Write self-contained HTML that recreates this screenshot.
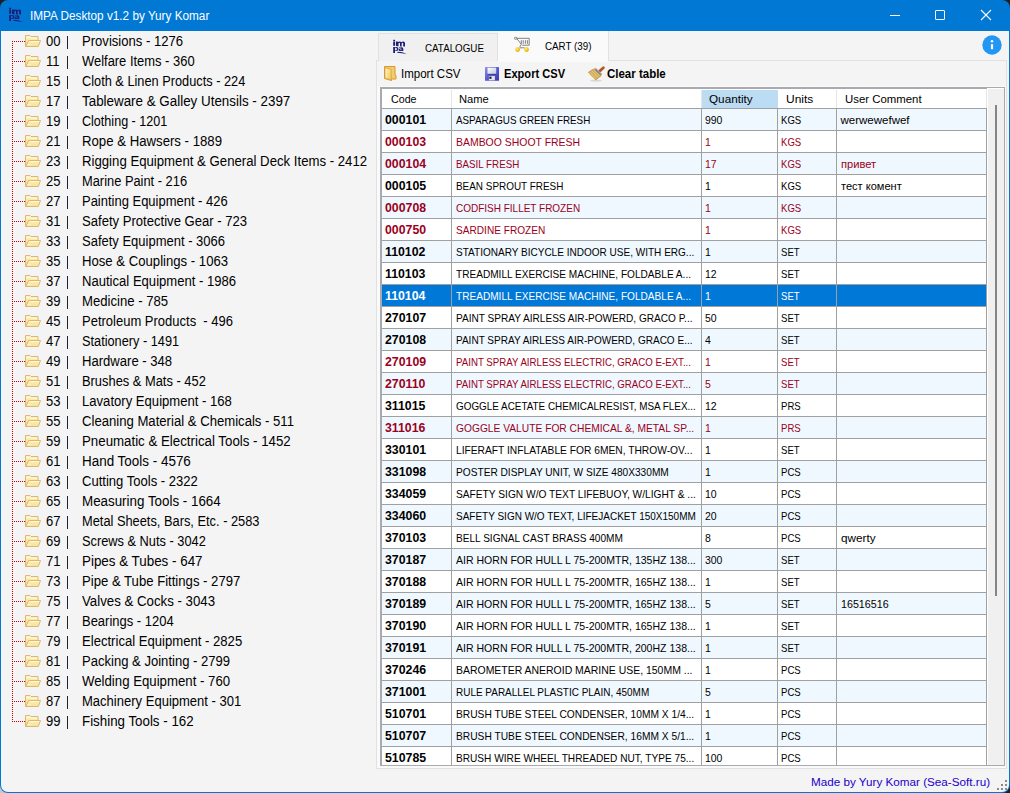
<!DOCTYPE html>
<html><head><meta charset="utf-8">
<style>
*{box-sizing:border-box;margin:0;padding:0}
html,body{width:1010px;height:793px;overflow:hidden;background:#1f1f1f}
body{font-family:"Liberation Sans",sans-serif;position:relative}
#win{position:absolute;left:0;top:0;width:1010px;height:793px;background:#0078d4;border-radius:8px;overflow:hidden}
.r{position:absolute}
.t{position:absolute;white-space:pre}
</style></head><body>
<svg width="0" height="0" style="position:absolute">
<defs>
<linearGradient id="fg" x1="0" y1="0" x2="0" y2="1"><stop offset="0" stop-color="#fff3c4"/><stop offset="1" stop-color="#f2d98a"/></linearGradient>
<linearGradient id="fg2" x1="0" y1="0" x2="0" y2="1"><stop offset="0" stop-color="#fbeeb0"/><stop offset="1" stop-color="#f6e29a"/></linearGradient>
<symbol id="folder" viewBox="0 0 16 12">
 <path d="M0.5 0.5h4.5l1 1h7v4h1.5l-2 6h-12z" fill="url(#fg)" stroke="#dcb870" stroke-width="1"/>
 <path d="M1.5 2.2h3.3l1 1h6.5" stroke="#fffbe8" stroke-width="0.9" fill="none"/>
 <path d="M3.5 5.5h12l-2.2 6h-12.5z" fill="url(#fg2)" stroke="#dcb870" stroke-width="1"/>
 <path d="M4.2 6.6h10M2.6 9.8h3" stroke="#fffbe0" stroke-width="0.9" fill="none"/>
</symbol>
<symbol id="impa" viewBox="0 0 16 17">
 <g fill="#1e1c76">
 <rect x="1.2" y="1.8" width="1.9" height="1.3"/>
 <rect x="1.2" y="3.5" width="1.8" height="4.3"/>
 <path d="M3.9 7.8V3.5h1.8v0.6q0.8-0.7 2-0.7q1.2 0 1.5 0.8q0.9-0.8 2.1-0.8q1.7 0 1.7 1.8v3.4h-1.8v-3.1q0-0.7-0.7-0.7t-0.8 0.7v3.1h-1.7v-3.1q0-0.7-0.7-0.7t-0.8 0.7v3.1z"/>
 <path fill-rule="evenodd" d="M1.2 14.9V9h1.8v0.4q0.6-0.5 1.5-0.5q2 0 2 2.1q0 2.1-2 2.1q-0.9 0-1.5-0.5v2.3z M3 10.3v1.6q0.4 0.4 1 0.4q0.9 0 0.9-1.2q0-1.2-0.9-1.2q-0.6 0-1 0.4z"/>
 <path fill-rule="evenodd" d="M7 9.3q0.9-0.4 2-0.4q2.3 0 2.3 1.9v2.2h-1.7v-0.5q-0.5 0.6-1.5 0.6q-1.5 0-1.5-1.3q0-1.5 2.6-1.6h0.4q0-0.6-0.9-0.6q-0.8 0-1.6 0.4z M9.6 11.1h-0.4q-1 0.1-1 0.6q0 0.4 0.5 0.4q0.9 0 0.9-1z"/>
 <path d="M5.3 13.9q4.5-0.3 9.4 2.1q-4.8-0.9-9.4-1.2z"/>
 </g>
</symbol>
</defs></svg>
<div class="r" style="left:0;top:783px;width:10px;height:10px;background:#c8c8c8"></div>
<div id="win">
<svg class="r" style="left:7.8px;top:6.2px" width="16" height="17"><use href="#impa"/></svg>
<div class="t" style="left:29.8px;top:9.84px;font-size:12px;line-height:12px;color:#fff;transform:scaleX(0.98);transform-origin:0 0;">IMPA Desktop v1.2 by Yury Komar</div>
<div class="r" style="left:890px;top:15px;width:10px;height:1px;background:#fff;"></div>
<div class="r" style="left:935px;top:10px;width:10px;height:10px;border:1px solid #fff;border-radius:1px"></div>
<svg class="r" style="left:980px;top:9px" width="12" height="12"><path d="M1 1L11 11M11 1L1 11" stroke="#fff" stroke-width="1.1"/></svg>
<div class="r" style="left:1px;top:31px;width:1008px;height:761px;background:#f4f4f4;border-radius:0 0 7px 7px"></div>
<div class="r" style="left:12px;top:41px;width:1px;height:681px;background:repeating-linear-gradient(to bottom,#c00000 0 1px,transparent 1px 2px)"></div>
<div class="r" style="left:13px;top:41px;width:12px;height:1px;background:repeating-linear-gradient(to right,transparent 0 1px,#c00000 1px 2px)"></div>
<svg class="r" style="left:25px;top:35px" width="16" height="12"><use href="#folder"/></svg>
<div class="t" style="left:46px;top:34.15px;font-size:14px;line-height:14px;color:#000;transform:scaleX(0.93);transform-origin:0 0;">00</div>
<div class="r" style="left:67px;top:36px;width:1px;height:13px;background:#202030;"></div>
<div class="t" style="left:81.5px;top:34.15px;font-size:14px;line-height:14px;color:#000;transform:scaleX(0.9346071428571427);transform-origin:0 0;">Provisions - 1276</div>
<div class="r" style="left:13px;top:61px;width:12px;height:1px;background:repeating-linear-gradient(to right,transparent 0 1px,#c00000 1px 2px)"></div>
<svg class="r" style="left:25px;top:55px" width="16" height="12"><use href="#folder"/></svg>
<div class="t" style="left:46px;top:54.15px;font-size:14px;line-height:14px;color:#000;transform:scaleX(0.93);transform-origin:0 0;">11</div>
<div class="r" style="left:67px;top:56px;width:1px;height:13px;background:#202030;"></div>
<div class="t" style="left:81.5px;top:54.15px;font-size:14px;line-height:14px;color:#000;transform:scaleX(0.9235571428571429);transform-origin:0 0;">Welfare Items - 360</div>
<div class="r" style="left:13px;top:81px;width:12px;height:1px;background:repeating-linear-gradient(to right,transparent 0 1px,#c00000 1px 2px)"></div>
<svg class="r" style="left:25px;top:75px" width="16" height="12"><use href="#folder"/></svg>
<div class="t" style="left:46px;top:74.15px;font-size:14px;line-height:14px;color:#000;transform:scaleX(0.93);transform-origin:0 0;">15</div>
<div class="r" style="left:67px;top:76px;width:1px;height:13px;background:#202030;"></div>
<div class="t" style="left:81.5px;top:74.15px;font-size:14px;line-height:14px;color:#000;transform:scaleX(0.9122285714285715);transform-origin:0 0;">Cloth &amp; Linen Products - 224</div>
<div class="r" style="left:13px;top:101px;width:12px;height:1px;background:repeating-linear-gradient(to right,transparent 0 1px,#c00000 1px 2px)"></div>
<svg class="r" style="left:25px;top:95px" width="16" height="12"><use href="#folder"/></svg>
<div class="t" style="left:46px;top:94.15px;font-size:14px;line-height:14px;color:#000;transform:scaleX(0.93);transform-origin:0 0;">17</div>
<div class="r" style="left:67px;top:96px;width:1px;height:13px;background:#202030;"></div>
<div class="t" style="left:81.5px;top:94.15px;font-size:14px;line-height:14px;color:#000;transform:scaleX(0.9560571428571428);transform-origin:0 0;">Tableware &amp; Galley Utensils - 2397</div>
<div class="r" style="left:13px;top:121px;width:12px;height:1px;background:repeating-linear-gradient(to right,transparent 0 1px,#c00000 1px 2px)"></div>
<svg class="r" style="left:25px;top:115px" width="16" height="12"><use href="#folder"/></svg>
<div class="t" style="left:46px;top:114.15px;font-size:14px;line-height:14px;color:#000;transform:scaleX(0.93);transform-origin:0 0;">19</div>
<div class="r" style="left:67px;top:116px;width:1px;height:13px;background:#202030;"></div>
<div class="t" style="left:81.5px;top:114.15px;font-size:14px;line-height:14px;color:#000;transform:scaleX(0.8980214285714286);transform-origin:0 0;">Clothing - 1201</div>
<div class="r" style="left:13px;top:141px;width:12px;height:1px;background:repeating-linear-gradient(to right,transparent 0 1px,#c00000 1px 2px)"></div>
<svg class="r" style="left:25px;top:135px" width="16" height="12"><use href="#folder"/></svg>
<div class="t" style="left:46px;top:134.15px;font-size:14px;line-height:14px;color:#000;transform:scaleX(0.93);transform-origin:0 0;">21</div>
<div class="r" style="left:67px;top:136px;width:1px;height:13px;background:#202030;"></div>
<div class="t" style="left:81.5px;top:134.15px;font-size:14px;line-height:14px;color:#000;transform:scaleX(0.9420357142857142);transform-origin:0 0;">Rope &amp; Hawsers - 1889</div>
<div class="r" style="left:13px;top:161px;width:12px;height:1px;background:repeating-linear-gradient(to right,transparent 0 1px,#c00000 1px 2px)"></div>
<svg class="r" style="left:25px;top:155px" width="16" height="12"><use href="#folder"/></svg>
<div class="t" style="left:46px;top:154.15px;font-size:14px;line-height:14px;color:#000;transform:scaleX(0.93);transform-origin:0 0;">23</div>
<div class="r" style="left:67px;top:156px;width:1px;height:13px;background:#202030;"></div>
<div class="t" style="left:81.5px;top:154.15px;font-size:14px;line-height:14px;color:#000;transform:scaleX(0.94185);transform-origin:0 0;">Rigging Equipment &amp; General Deck Items - 2412</div>
<div class="r" style="left:13px;top:181px;width:12px;height:1px;background:repeating-linear-gradient(to right,transparent 0 1px,#c00000 1px 2px)"></div>
<svg class="r" style="left:25px;top:175px" width="16" height="12"><use href="#folder"/></svg>
<div class="t" style="left:46px;top:174.15px;font-size:14px;line-height:14px;color:#000;transform:scaleX(0.93);transform-origin:0 0;">25</div>
<div class="r" style="left:67px;top:176px;width:1px;height:13px;background:#202030;"></div>
<div class="t" style="left:81.5px;top:174.15px;font-size:14px;line-height:14px;color:#000;transform:scaleX(0.9185428571428572);transform-origin:0 0;">Marine Paint - 216</div>
<div class="r" style="left:13px;top:201px;width:12px;height:1px;background:repeating-linear-gradient(to right,transparent 0 1px,#c00000 1px 2px)"></div>
<svg class="r" style="left:25px;top:195px" width="16" height="12"><use href="#folder"/></svg>
<div class="t" style="left:46px;top:194.15px;font-size:14px;line-height:14px;color:#000;transform:scaleX(0.93);transform-origin:0 0;">27</div>
<div class="r" style="left:67px;top:196px;width:1px;height:13px;background:#202030;"></div>
<div class="t" style="left:81.5px;top:194.15px;font-size:14px;line-height:14px;color:#000;transform:scaleX(0.9267142857142857);transform-origin:0 0;">Painting Equipment - 426</div>
<div class="r" style="left:13px;top:221px;width:12px;height:1px;background:repeating-linear-gradient(to right,transparent 0 1px,#c00000 1px 2px)"></div>
<svg class="r" style="left:25px;top:215px" width="16" height="12"><use href="#folder"/></svg>
<div class="t" style="left:46px;top:214.15px;font-size:14px;line-height:14px;color:#000;transform:scaleX(0.93);transform-origin:0 0;">31</div>
<div class="r" style="left:67px;top:216px;width:1px;height:13px;background:#202030;"></div>
<div class="t" style="left:81.5px;top:214.15px;font-size:14px;line-height:14px;color:#000;transform:scaleX(0.9346071428571427);transform-origin:0 0;">Safety Protective Gear - 723</div>
<div class="r" style="left:13px;top:241px;width:12px;height:1px;background:repeating-linear-gradient(to right,transparent 0 1px,#c00000 1px 2px)"></div>
<svg class="r" style="left:25px;top:235px" width="16" height="12"><use href="#folder"/></svg>
<div class="t" style="left:46px;top:234.15px;font-size:14px;line-height:14px;color:#000;transform:scaleX(0.93);transform-origin:0 0;">33</div>
<div class="r" style="left:67px;top:236px;width:1px;height:13px;background:#202030;"></div>
<div class="t" style="left:81.5px;top:234.15px;font-size:14px;line-height:14px;color:#000;transform:scaleX(0.9279214285714286);transform-origin:0 0;">Safety Equipment - 3066</div>
<div class="r" style="left:13px;top:261px;width:12px;height:1px;background:repeating-linear-gradient(to right,transparent 0 1px,#c00000 1px 2px)"></div>
<svg class="r" style="left:25px;top:255px" width="16" height="12"><use href="#folder"/></svg>
<div class="t" style="left:46px;top:254.15px;font-size:14px;line-height:14px;color:#000;transform:scaleX(0.93);transform-origin:0 0;">35</div>
<div class="r" style="left:67px;top:256px;width:1px;height:13px;background:#202030;"></div>
<div class="t" style="left:81.5px;top:254.15px;font-size:14px;line-height:14px;color:#000;transform:scaleX(0.938692857142857);transform-origin:0 0;">Hose &amp; Couplings - 1063</div>
<div class="r" style="left:13px;top:281px;width:12px;height:1px;background:repeating-linear-gradient(to right,transparent 0 1px,#c00000 1px 2px)"></div>
<svg class="r" style="left:25px;top:275px" width="16" height="12"><use href="#folder"/></svg>
<div class="t" style="left:46px;top:274.15px;font-size:14px;line-height:14px;color:#000;transform:scaleX(0.93);transform-origin:0 0;">37</div>
<div class="r" style="left:67px;top:276px;width:1px;height:13px;background:#202030;"></div>
<div class="t" style="left:81.5px;top:274.15px;font-size:14px;line-height:14px;color:#000;transform:scaleX(0.93405);transform-origin:0 0;">Nautical Equipment - 1986</div>
<div class="r" style="left:13px;top:301px;width:12px;height:1px;background:repeating-linear-gradient(to right,transparent 0 1px,#c00000 1px 2px)"></div>
<svg class="r" style="left:25px;top:295px" width="16" height="12"><use href="#folder"/></svg>
<div class="t" style="left:46px;top:294.15px;font-size:14px;line-height:14px;color:#000;transform:scaleX(0.93);transform-origin:0 0;">39</div>
<div class="r" style="left:67px;top:296px;width:1px;height:13px;background:#202030;"></div>
<div class="t" style="left:81.5px;top:294.15px;font-size:14px;line-height:14px;color:#000;transform:scaleX(0.9375785714285715);transform-origin:0 0;">Medicine - 785</div>
<div class="r" style="left:13px;top:321px;width:12px;height:1px;background:repeating-linear-gradient(to right,transparent 0 1px,#c00000 1px 2px)"></div>
<svg class="r" style="left:25px;top:315px" width="16" height="12"><use href="#folder"/></svg>
<div class="t" style="left:46px;top:314.15px;font-size:14px;line-height:14px;color:#000;transform:scaleX(0.93);transform-origin:0 0;">45</div>
<div class="r" style="left:67px;top:316px;width:1px;height:13px;background:#202030;"></div>
<div class="t" style="left:81.5px;top:314.15px;font-size:14px;line-height:14px;color:#000;transform:scaleX(0.9283857142857144);transform-origin:0 0;">Petroleum Products  - 496</div>
<div class="r" style="left:13px;top:341px;width:12px;height:1px;background:repeating-linear-gradient(to right,transparent 0 1px,#c00000 1px 2px)"></div>
<svg class="r" style="left:25px;top:335px" width="16" height="12"><use href="#folder"/></svg>
<div class="t" style="left:46px;top:334.15px;font-size:14px;line-height:14px;color:#000;transform:scaleX(0.93);transform-origin:0 0;">47</div>
<div class="r" style="left:67px;top:336px;width:1px;height:13px;background:#202030;"></div>
<div class="t" style="left:81.5px;top:334.15px;font-size:14px;line-height:14px;color:#000;transform:scaleX(0.9104642857142858);transform-origin:0 0;">Stationery - 1491</div>
<div class="r" style="left:13px;top:361px;width:12px;height:1px;background:repeating-linear-gradient(to right,transparent 0 1px,#c00000 1px 2px)"></div>
<svg class="r" style="left:25px;top:355px" width="16" height="12"><use href="#folder"/></svg>
<div class="t" style="left:46px;top:354.15px;font-size:14px;line-height:14px;color:#000;transform:scaleX(0.93);transform-origin:0 0;">49</div>
<div class="r" style="left:67px;top:356px;width:1px;height:13px;background:#202030;"></div>
<div class="t" style="left:81.5px;top:354.15px;font-size:14px;line-height:14px;color:#000;transform:scaleX(0.9336785714285715);transform-origin:0 0;">Hardware - 348</div>
<div class="r" style="left:13px;top:381px;width:12px;height:1px;background:repeating-linear-gradient(to right,transparent 0 1px,#c00000 1px 2px)"></div>
<svg class="r" style="left:25px;top:375px" width="16" height="12"><use href="#folder"/></svg>
<div class="t" style="left:46px;top:374.15px;font-size:14px;line-height:14px;color:#000;transform:scaleX(0.93);transform-origin:0 0;">51</div>
<div class="r" style="left:67px;top:376px;width:1px;height:13px;background:#202030;"></div>
<div class="t" style="left:81.5px;top:374.15px;font-size:14px;line-height:14px;color:#000;transform:scaleX(0.9195642857142856);transform-origin:0 0;">Brushes &amp; Mats - 452</div>
<div class="r" style="left:13px;top:401px;width:12px;height:1px;background:repeating-linear-gradient(to right,transparent 0 1px,#c00000 1px 2px)"></div>
<svg class="r" style="left:25px;top:395px" width="16" height="12"><use href="#folder"/></svg>
<div class="t" style="left:46px;top:394.15px;font-size:14px;line-height:14px;color:#000;transform:scaleX(0.93);transform-origin:0 0;">53</div>
<div class="r" style="left:67px;top:396px;width:1px;height:13px;background:#202030;"></div>
<div class="t" style="left:81.5px;top:394.15px;font-size:14px;line-height:14px;color:#000;transform:scaleX(0.9349785714285713);transform-origin:0 0;">Lavatory Equipment - 168</div>
<div class="r" style="left:13px;top:421px;width:12px;height:1px;background:repeating-linear-gradient(to right,transparent 0 1px,#c00000 1px 2px)"></div>
<svg class="r" style="left:25px;top:415px" width="16" height="12"><use href="#folder"/></svg>
<div class="t" style="left:46px;top:414.15px;font-size:14px;line-height:14px;color:#000;transform:scaleX(0.93);transform-origin:0 0;">55</div>
<div class="r" style="left:67px;top:416px;width:1px;height:13px;background:#202030;"></div>
<div class="t" style="left:81.5px;top:414.15px;font-size:14px;line-height:14px;color:#000;transform:scaleX(0.9373000000000001);transform-origin:0 0;">Cleaning Material &amp; Chemicals - 511</div>
<div class="r" style="left:13px;top:441px;width:12px;height:1px;background:repeating-linear-gradient(to right,transparent 0 1px,#c00000 1px 2px)"></div>
<svg class="r" style="left:25px;top:435px" width="16" height="12"><use href="#folder"/></svg>
<div class="t" style="left:46px;top:434.15px;font-size:14px;line-height:14px;color:#000;transform:scaleX(0.93);transform-origin:0 0;">59</div>
<div class="r" style="left:67px;top:436px;width:1px;height:13px;background:#202030;"></div>
<div class="t" style="left:81.5px;top:434.15px;font-size:14px;line-height:14px;color:#000;transform:scaleX(0.948907142857143);transform-origin:0 0;">Pneumatic &amp; Electrical Tools - 1452</div>
<div class="r" style="left:13px;top:461px;width:12px;height:1px;background:repeating-linear-gradient(to right,transparent 0 1px,#c00000 1px 2px)"></div>
<svg class="r" style="left:25px;top:455px" width="16" height="12"><use href="#folder"/></svg>
<div class="t" style="left:46px;top:454.15px;font-size:14px;line-height:14px;color:#000;transform:scaleX(0.93);transform-origin:0 0;">61</div>
<div class="r" style="left:67px;top:456px;width:1px;height:13px;background:#202030;"></div>
<div class="t" style="left:81.5px;top:454.15px;font-size:14px;line-height:14px;color:#000;transform:scaleX(0.9598642857142857);transform-origin:0 0;">Hand Tools - 4576</div>
<div class="r" style="left:13px;top:481px;width:12px;height:1px;background:repeating-linear-gradient(to right,transparent 0 1px,#c00000 1px 2px)"></div>
<svg class="r" style="left:25px;top:475px" width="16" height="12"><use href="#folder"/></svg>
<div class="t" style="left:46px;top:474.15px;font-size:14px;line-height:14px;color:#000;transform:scaleX(0.93);transform-origin:0 0;">63</div>
<div class="r" style="left:67px;top:476px;width:1px;height:13px;background:#202030;"></div>
<div class="t" style="left:81.5px;top:474.15px;font-size:14px;line-height:14px;color:#000;transform:scaleX(0.9319142857142858);transform-origin:0 0;">Cutting Tools - 2322</div>
<div class="r" style="left:13px;top:501px;width:12px;height:1px;background:repeating-linear-gradient(to right,transparent 0 1px,#c00000 1px 2px)"></div>
<svg class="r" style="left:25px;top:495px" width="16" height="12"><use href="#folder"/></svg>
<div class="t" style="left:46px;top:494.15px;font-size:14px;line-height:14px;color:#000;transform:scaleX(0.93);transform-origin:0 0;">65</div>
<div class="r" style="left:67px;top:496px;width:1px;height:13px;background:#202030;"></div>
<div class="t" style="left:81.5px;top:494.15px;font-size:14px;line-height:14px;color:#000;transform:scaleX(0.9548500000000001);transform-origin:0 0;">Measuring Tools - 1664</div>
<div class="r" style="left:13px;top:521px;width:12px;height:1px;background:repeating-linear-gradient(to right,transparent 0 1px,#c00000 1px 2px)"></div>
<svg class="r" style="left:25px;top:515px" width="16" height="12"><use href="#folder"/></svg>
<div class="t" style="left:46px;top:514.15px;font-size:14px;line-height:14px;color:#000;transform:scaleX(0.93);transform-origin:0 0;">67</div>
<div class="r" style="left:67px;top:516px;width:1px;height:13px;background:#202030;"></div>
<div class="t" style="left:81.5px;top:514.15px;font-size:14px;line-height:14px;color:#000;transform:scaleX(0.9160357142857143);transform-origin:0 0;">Metal Sheets, Bars, Etc. - 2583</div>
<div class="r" style="left:13px;top:541px;width:12px;height:1px;background:repeating-linear-gradient(to right,transparent 0 1px,#c00000 1px 2px)"></div>
<svg class="r" style="left:25px;top:535px" width="16" height="12"><use href="#folder"/></svg>
<div class="t" style="left:46px;top:534.15px;font-size:14px;line-height:14px;color:#000;transform:scaleX(0.93);transform-origin:0 0;">69</div>
<div class="r" style="left:67px;top:536px;width:1px;height:13px;background:#202030;"></div>
<div class="t" style="left:81.5px;top:534.15px;font-size:14px;line-height:14px;color:#000;transform:scaleX(0.9142714285714286);transform-origin:0 0;">Screws &amp; Nuts - 3042</div>
<div class="r" style="left:13px;top:561px;width:12px;height:1px;background:repeating-linear-gradient(to right,transparent 0 1px,#c00000 1px 2px)"></div>
<svg class="r" style="left:25px;top:555px" width="16" height="12"><use href="#folder"/></svg>
<div class="t" style="left:46px;top:554.15px;font-size:14px;line-height:14px;color:#000;transform:scaleX(0.93);transform-origin:0 0;">71</div>
<div class="r" style="left:67px;top:556px;width:1px;height:13px;background:#202030;"></div>
<div class="t" style="left:81.5px;top:554.15px;font-size:14px;line-height:14px;color:#000;transform:scaleX(0.9558714285714286);transform-origin:0 0;">Pipes &amp; Tubes - 647</div>
<div class="r" style="left:13px;top:581px;width:12px;height:1px;background:repeating-linear-gradient(to right,transparent 0 1px,#c00000 1px 2px)"></div>
<svg class="r" style="left:25px;top:575px" width="16" height="12"><use href="#folder"/></svg>
<div class="t" style="left:46px;top:574.15px;font-size:14px;line-height:14px;color:#000;transform:scaleX(0.93);transform-origin:0 0;">73</div>
<div class="r" style="left:67px;top:576px;width:1px;height:13px;background:#202030;"></div>
<div class="t" style="left:81.5px;top:574.15px;font-size:14px;line-height:14px;color:#000;transform:scaleX(0.9373928571428571);transform-origin:0 0;">Pipe &amp; Tube Fittings - 2797</div>
<div class="r" style="left:13px;top:601px;width:12px;height:1px;background:repeating-linear-gradient(to right,transparent 0 1px,#c00000 1px 2px)"></div>
<svg class="r" style="left:25px;top:595px" width="16" height="12"><use href="#folder"/></svg>
<div class="t" style="left:46px;top:594.15px;font-size:14px;line-height:14px;color:#000;transform:scaleX(0.93);transform-origin:0 0;">75</div>
<div class="r" style="left:67px;top:596px;width:1px;height:13px;background:#202030;"></div>
<div class="t" style="left:81.5px;top:594.15px;font-size:14px;line-height:14px;color:#000;transform:scaleX(0.9468642857142857);transform-origin:0 0;">Valves &amp; Cocks - 3043</div>
<div class="r" style="left:13px;top:621px;width:12px;height:1px;background:repeating-linear-gradient(to right,transparent 0 1px,#c00000 1px 2px)"></div>
<svg class="r" style="left:25px;top:615px" width="16" height="12"><use href="#folder"/></svg>
<div class="t" style="left:46px;top:614.15px;font-size:14px;line-height:14px;color:#000;transform:scaleX(0.93);transform-origin:0 0;">77</div>
<div class="r" style="left:67px;top:616px;width:1px;height:13px;background:#202030;"></div>
<div class="t" style="left:81.5px;top:614.15px;font-size:14px;line-height:14px;color:#000;transform:scaleX(0.9267142857142857);transform-origin:0 0;">Bearings - 1204</div>
<div class="r" style="left:13px;top:641px;width:12px;height:1px;background:repeating-linear-gradient(to right,transparent 0 1px,#c00000 1px 2px)"></div>
<svg class="r" style="left:25px;top:635px" width="16" height="12"><use href="#folder"/></svg>
<div class="t" style="left:46px;top:634.15px;font-size:14px;line-height:14px;color:#000;transform:scaleX(0.93);transform-origin:0 0;">79</div>
<div class="r" style="left:67px;top:636px;width:1px;height:13px;background:#202030;"></div>
<div class="t" style="left:81.5px;top:634.15px;font-size:14px;line-height:14px;color:#000;transform:scaleX(0.9357214285714287);transform-origin:0 0;">Electrical Equipment - 2825</div>
<div class="r" style="left:13px;top:661px;width:12px;height:1px;background:repeating-linear-gradient(to right,transparent 0 1px,#c00000 1px 2px)"></div>
<svg class="r" style="left:25px;top:655px" width="16" height="12"><use href="#folder"/></svg>
<div class="t" style="left:46px;top:654.15px;font-size:14px;line-height:14px;color:#000;transform:scaleX(0.93);transform-origin:0 0;">81</div>
<div class="r" style="left:67px;top:656px;width:1px;height:13px;background:#202030;"></div>
<div class="t" style="left:81.5px;top:654.15px;font-size:14px;line-height:14px;color:#000;transform:scaleX(0.9327499999999999);transform-origin:0 0;">Packing &amp; Jointing - 2799</div>
<div class="r" style="left:13px;top:681px;width:12px;height:1px;background:repeating-linear-gradient(to right,transparent 0 1px,#c00000 1px 2px)"></div>
<svg class="r" style="left:25px;top:675px" width="16" height="12"><use href="#folder"/></svg>
<div class="t" style="left:46px;top:674.15px;font-size:14px;line-height:14px;color:#000;transform:scaleX(0.93);transform-origin:0 0;">85</div>
<div class="r" style="left:67px;top:676px;width:1px;height:13px;background:#202030;"></div>
<div class="t" style="left:81.5px;top:674.15px;font-size:14px;line-height:14px;color:#000;transform:scaleX(0.9436142857142856);transform-origin:0 0;">Welding Equipment - 760</div>
<div class="r" style="left:13px;top:701px;width:12px;height:1px;background:repeating-linear-gradient(to right,transparent 0 1px,#c00000 1px 2px)"></div>
<svg class="r" style="left:25px;top:695px" width="16" height="12"><use href="#folder"/></svg>
<div class="t" style="left:46px;top:694.15px;font-size:14px;line-height:14px;color:#000;transform:scaleX(0.93);transform-origin:0 0;">87</div>
<div class="r" style="left:67px;top:696px;width:1px;height:13px;background:#202030;"></div>
<div class="t" style="left:81.5px;top:694.15px;font-size:14px;line-height:14px;color:#000;transform:scaleX(0.9304285714285714);transform-origin:0 0;">Machinery Equipment - 301</div>
<div class="r" style="left:13px;top:721px;width:12px;height:1px;background:repeating-linear-gradient(to right,transparent 0 1px,#c00000 1px 2px)"></div>
<svg class="r" style="left:25px;top:715px" width="16" height="12"><use href="#folder"/></svg>
<div class="t" style="left:46px;top:714.15px;font-size:14px;line-height:14px;color:#000;transform:scaleX(0.93);transform-origin:0 0;">99</div>
<div class="r" style="left:67px;top:716px;width:1px;height:13px;background:#202030;"></div>
<div class="t" style="left:81.5px;top:714.15px;font-size:14px;line-height:14px;color:#000;transform:scaleX(0.9519714285714285);transform-origin:0 0;">Fishing Tools - 162</div>
<div class="r" style="left:376px;top:60px;width:631px;height:709px;background:#fafafa;border:1px solid #e1e1e1"></div>
<div class="r" style="left:377px;top:61px;width:629px;height:25px;background:#f4f4f4;"></div>
<div class="r" style="left:378px;top:33px;width:120px;height:28px;background:#f0f0f0;border:1px solid #e1e1e1;border-bottom:none"></div>
<svg class="r" style="left:392px;top:38px" width="16" height="17"><use href="#impa"/></svg>
<div class="t" style="left:424.5px;top:42.69px;font-size:11px;line-height:11px;color:#000;transform:scaleX(0.89);transform-origin:0 0;">CATALOGUE</div>
<div class="r" style="left:498px;top:31px;width:111px;height:30px;background:#fafafa;border-right:1px solid #e1e1e1;"></div>
<div class="r" style="left:498px;top:60px;width:110px;height:2px;background:#fafafa;"></div>
<svg class="r" style="left:514px;top:36px" width="17" height="17" viewBox="0 -1 17 17">
<defs><radialGradient id="wg" cx="0.4" cy="0.4" r="0.6"><stop offset="0" stop-color="#fff6a0"/><stop offset="0.5" stop-color="#f8cc20"/><stop offset="1" stop-color="#e0a000"/></radialGradient></defs>
<g stroke="#7a7a7a" fill="none" stroke-width="0.95">
<ellipse cx="1.7" cy="1.3" rx="1.4" ry="1"/>
<path d="M3 1.3H15.2V8.2H8.2M3 1.8L7.3 7.3L5.6 10.2M7.3 3.2V6.8M9.2 3.2V6.8M11.4 3.2V6.8M13.4 3.2V6.8M5.8 10.8H10.5"/>
</g>
<circle cx="3.6" cy="12.6" r="2.3" fill="url(#wg)"/>
<circle cx="12.5" cy="12.6" r="2.3" fill="url(#wg)"/>
</svg>
<div class="t" style="left:545.3px;top:40.69px;font-size:11px;line-height:11px;color:#000;transform:scaleX(0.89);transform-origin:0 0;">CART (39)</div>
<svg class="r" style="left:982px;top:35px" width="20" height="20" viewBox="0 0 20 20"><circle cx="10" cy="10" r="9.7" fill="#2196f3"/><rect x="8.9" y="9.2" width="2.2" height="5" fill="#fff"/><circle cx="10" cy="6.2" r="1.25" fill="#fff"/></svg>
<svg class="r" style="left:384px;top:66px" width="13" height="15" viewBox="0 0 13 15">
<defs><linearGradient id="ig" x1="0" y1="0" x2="1" y2="1"><stop offset="0" stop-color="#fff0b0"/><stop offset="1" stop-color="#f0c860"/></linearGradient></defs>
<path d="M0.5 0.5H11V9L12 9.5V13H7.5V14.5L0.5 12.5Z" fill="#f2cd6a" stroke="#d9982e" stroke-width="1"/>
<path d="M1.3 1.8L7.2 3.2V14L1.3 12.2Z" fill="url(#ig)" stroke="#dca040" stroke-width="0.8"/>
<path d="M2 2.5V11.8" stroke="#fff8d8" stroke-width="0.8"/>
</svg>
<div class="t" style="left:400.7px;top:67.84px;font-size:12px;line-height:12px;color:#000;transform:scaleX(0.96);transform-origin:0 0;">Import CSV</div>
<svg class="r" style="left:485px;top:67px" width="14" height="14" viewBox="0 0 14 14">
<defs><linearGradient id="sg" x1="0" y1="0" x2="1" y2="1"><stop offset="0" stop-color="#9090ee"/><stop offset="0.5" stop-color="#5a5ad0"/><stop offset="1" stop-color="#3a3aa8"/></linearGradient>
<linearGradient id="sl" x1="0" y1="0" x2="1" y2="1"><stop offset="0" stop-color="#ffffff"/><stop offset="1" stop-color="#c0c8dc"/></linearGradient></defs>
<rect x="0" y="0" width="14" height="13.8" rx="0.6" fill="url(#sg)"/>
<rect x="2.5" y="0.7" width="8.7" height="6.2" fill="url(#sl)"/>
<rect x="2.5" y="6.9" width="8.7" height="0.8" fill="#3838a0"/>
<rect x="3.9" y="9" width="6" height="4.3" fill="#e4e4ec"/>
<rect x="4.3" y="9.6" width="2.2" height="2.2" fill="#1c1c30"/>
</svg>
<div class="t" style="left:503.5px;top:67.84px;font-size:12px;line-height:12px;color:#000;font-weight:bold;transform:scaleX(0.925);transform-origin:0 0;">Export CSV</div>
<svg class="r" style="left:588px;top:66px" width="17" height="16" viewBox="0 0 17 16">
<ellipse cx="8" cy="14.6" rx="6" ry="1" fill="#000" opacity="0.12"/>
<path d="M12.2 4.6L15.4 1.8" stroke="#b05a28" stroke-width="2.8" stroke-linecap="round"/>
<path d="M0.3 6.3L4.5 3.6L7.8 2.4L13.6 7.8L12.6 10.2L7.8 13.9Z" fill="#d4ae5e" stroke="#b88a3c" stroke-width="0.6"/>
<path d="M2.2 6.6L8 12.4M4 5.3L10 11.2M6 4.2L11.6 9.6M1.6 8.4L6.2 12.6" stroke="#ecd28a" stroke-width="0.7"/>
<path d="M7.4 3.4L13 8.6" stroke="#7a7a8c" stroke-width="1.7"/>
<path d="M7.6 3.1L13.2 8.3" stroke="#e0e0ea" stroke-width="0.6" stroke-dasharray="0.8 0.8"/>
</svg>
<div class="t" style="left:607px;top:67.84px;font-size:12px;line-height:12px;color:#000;font-weight:bold;transform:scaleX(0.957);transform-origin:0 0;">Clear table</div>
<div class="r" style="left:380px;top:87px;width:625px;height:679px;background:#fff;border:1px solid #a9aab0;border-top:2px solid #a9aab0;border-left:2px solid #a9aab0"></div>
<div class="r" style="left:702px;top:90px;width:76px;height:18px;background:#bcdcf4;"></div>
<div class="r" style="left:451px;top:90px;width:1px;height:18px;background:#e5e5e5;"></div>
<div class="r" style="left:701px;top:90px;width:1px;height:18px;background:#e5e5e5;"></div>
<div class="r" style="left:836px;top:90px;width:1px;height:18px;background:#e5e5e5;"></div>
<div class="r" style="left:986px;top:90px;width:1px;height:18px;background:#e5e5e5;"></div>
<div class="r" style="left:382px;top:108px;width:605px;height:1px;background:#a0a0a0;"></div>
<div class="t" style="left:391px;top:94.27px;font-size:11.5px;line-height:11.5px;color:#000;transform:scaleX(0.93);transform-origin:0 0;">Code</div>
<div class="t" style="left:458.8px;top:94.27px;font-size:11.5px;line-height:11.5px;color:#000;transform:scaleX(0.97);transform-origin:0 0;">Name</div>
<div class="t" style="left:709px;top:94.27px;font-size:11.5px;line-height:11.5px;color:#000;transform:scaleX(1.02);transform-origin:0 0;">Quantity</div>
<div class="t" style="left:785.5px;top:94.27px;font-size:11.5px;line-height:11.5px;color:#000;transform:scaleX(1.04);transform-origin:0 0;">Units</div>
<div class="t" style="left:844.5px;top:94.27px;font-size:11.5px;line-height:11.5px;color:#000;transform:scaleX(0.99);transform-origin:0 0;">User Comment</div>
<div class="r" style="left:382px;top:109px;width:605px;height:21px;background:#f0f8ff;"></div>
<div class="r" style="left:382px;top:130px;width:605px;height:1px;background:#a0a0a0;"></div>
<div class="r" style="left:381px;top:109px;width:606px;height:21px;overflow:hidden">
<div class="t" style="left:4.399999999999977px;top:5.42px;font-size:12.5px;line-height:12.5px;color:#000;font-weight:bold;transform:scaleX(0.985);transform-origin:0 0;">000101</div>
<div class="t" style="left:74.5px;top:5.69px;font-size:11px;line-height:11px;color:#000;transform:scaleX(0.8943);transform-origin:0 0;">ASPARAGUS GREEN FRESH</div>
<div class="t" style="left:324px;top:5.69px;font-size:11px;line-height:11px;color:#000;transform:scaleX(0.95);transform-origin:0 0;">990</div>
<div class="t" style="left:399.79999999999995px;top:5.69px;font-size:11px;line-height:11px;color:#000;transform:scaleX(0.87);transform-origin:0 0;">KGS</div>
<div class="t" style="left:459.5px;top:6.27px;font-size:11.5px;line-height:11.5px;color:#000;">werwewefwef</div>
</div>
<div class="r" style="left:382px;top:131px;width:605px;height:21px;background:#ffffff;"></div>
<div class="r" style="left:382px;top:152px;width:605px;height:1px;background:#a0a0a0;"></div>
<div class="r" style="left:381px;top:131px;width:606px;height:21px;overflow:hidden">
<div class="t" style="left:4.399999999999977px;top:5.42px;font-size:12.5px;line-height:12.5px;color:#9a0020;font-weight:bold;transform:scaleX(0.985);transform-origin:0 0;">000103</div>
<div class="t" style="left:74.5px;top:5.69px;font-size:11px;line-height:11px;color:#9a0020;transform:scaleX(0.9503);transform-origin:0 0;">BAMBOO SHOOT FRESH</div>
<div class="t" style="left:324px;top:5.69px;font-size:11px;line-height:11px;color:#9a0020;transform:scaleX(0.95);transform-origin:0 0;">1</div>
<div class="t" style="left:399.79999999999995px;top:5.69px;font-size:11px;line-height:11px;color:#9a0020;transform:scaleX(0.87);transform-origin:0 0;">KGS</div>
</div>
<div class="r" style="left:382px;top:153px;width:605px;height:21px;background:#f0f8ff;"></div>
<div class="r" style="left:382px;top:174px;width:605px;height:1px;background:#a0a0a0;"></div>
<div class="r" style="left:381px;top:153px;width:606px;height:21px;overflow:hidden">
<div class="t" style="left:4.399999999999977px;top:5.42px;font-size:12.5px;line-height:12.5px;color:#9a0020;font-weight:bold;transform:scaleX(0.985);transform-origin:0 0;">000104</div>
<div class="t" style="left:74.5px;top:5.69px;font-size:11px;line-height:11px;color:#9a0020;transform:scaleX(0.89);transform-origin:0 0;">BASIL FRESH</div>
<div class="t" style="left:324px;top:5.69px;font-size:11px;line-height:11px;color:#9a0020;transform:scaleX(0.95);transform-origin:0 0;">17</div>
<div class="t" style="left:399.79999999999995px;top:5.69px;font-size:11px;line-height:11px;color:#9a0020;transform:scaleX(0.87);transform-origin:0 0;">KGS</div>
<div class="t" style="left:459.5px;top:6.27px;font-size:11.5px;line-height:11.5px;color:#9a0020;transform:scaleX(0.97);transform-origin:0 0;">привет</div>
</div>
<div class="r" style="left:382px;top:175px;width:605px;height:21px;background:#ffffff;"></div>
<div class="r" style="left:382px;top:196px;width:605px;height:1px;background:#a0a0a0;"></div>
<div class="r" style="left:381px;top:175px;width:606px;height:21px;overflow:hidden">
<div class="t" style="left:4.399999999999977px;top:5.42px;font-size:12.5px;line-height:12.5px;color:#000;font-weight:bold;transform:scaleX(0.985);transform-origin:0 0;">000105</div>
<div class="t" style="left:74.5px;top:5.69px;font-size:11px;line-height:11px;color:#000;transform:scaleX(0.9017);transform-origin:0 0;">BEAN SPROUT FRESH</div>
<div class="t" style="left:324px;top:5.69px;font-size:11px;line-height:11px;color:#000;transform:scaleX(0.95);transform-origin:0 0;">1</div>
<div class="t" style="left:399.79999999999995px;top:5.69px;font-size:11px;line-height:11px;color:#000;transform:scaleX(0.87);transform-origin:0 0;">KGS</div>
<div class="t" style="left:459.5px;top:6.27px;font-size:11.5px;line-height:11.5px;color:#000;transform:scaleX(0.96);transform-origin:0 0;">тест комент</div>
</div>
<div class="r" style="left:382px;top:197px;width:605px;height:21px;background:#f0f8ff;"></div>
<div class="r" style="left:382px;top:218px;width:605px;height:1px;background:#a0a0a0;"></div>
<div class="r" style="left:381px;top:197px;width:606px;height:21px;overflow:hidden">
<div class="t" style="left:4.399999999999977px;top:5.42px;font-size:12.5px;line-height:12.5px;color:#9a0020;font-weight:bold;transform:scaleX(0.985);transform-origin:0 0;">000708</div>
<div class="t" style="left:74.5px;top:5.69px;font-size:11px;line-height:11px;color:#9a0020;transform:scaleX(0.9078);transform-origin:0 0;">CODFISH FILLET FROZEN</div>
<div class="t" style="left:324px;top:5.69px;font-size:11px;line-height:11px;color:#9a0020;transform:scaleX(0.95);transform-origin:0 0;">1</div>
<div class="t" style="left:399.79999999999995px;top:5.69px;font-size:11px;line-height:11px;color:#9a0020;transform:scaleX(0.87);transform-origin:0 0;">KGS</div>
</div>
<div class="r" style="left:382px;top:219px;width:605px;height:21px;background:#ffffff;"></div>
<div class="r" style="left:382px;top:240px;width:605px;height:1px;background:#a0a0a0;"></div>
<div class="r" style="left:381px;top:219px;width:606px;height:21px;overflow:hidden">
<div class="t" style="left:4.399999999999977px;top:5.42px;font-size:12.5px;line-height:12.5px;color:#9a0020;font-weight:bold;transform:scaleX(0.985);transform-origin:0 0;">000750</div>
<div class="t" style="left:74.5px;top:5.69px;font-size:11px;line-height:11px;color:#9a0020;transform:scaleX(0.9188);transform-origin:0 0;">SARDINE FROZEN</div>
<div class="t" style="left:324px;top:5.69px;font-size:11px;line-height:11px;color:#9a0020;transform:scaleX(0.95);transform-origin:0 0;">1</div>
<div class="t" style="left:399.79999999999995px;top:5.69px;font-size:11px;line-height:11px;color:#9a0020;transform:scaleX(0.87);transform-origin:0 0;">KGS</div>
</div>
<div class="r" style="left:382px;top:241px;width:605px;height:21px;background:#f0f8ff;"></div>
<div class="r" style="left:382px;top:262px;width:605px;height:1px;background:#a0a0a0;"></div>
<div class="r" style="left:381px;top:241px;width:606px;height:21px;overflow:hidden">
<div class="t" style="left:4.399999999999977px;top:5.42px;font-size:12.5px;line-height:12.5px;color:#000;font-weight:bold;transform:scaleX(0.985);transform-origin:0 0;">110102</div>
<div class="t" style="left:74.5px;top:5.69px;font-size:11px;line-height:11px;color:#000;transform:scaleX(0.9113);transform-origin:0 0;">STATIONARY BICYCLE INDOOR USE, WITH ERG...</div>
<div class="t" style="left:324px;top:5.69px;font-size:11px;line-height:11px;color:#000;transform:scaleX(0.95);transform-origin:0 0;">1</div>
<div class="t" style="left:399.79999999999995px;top:5.69px;font-size:11px;line-height:11px;color:#000;transform:scaleX(0.87);transform-origin:0 0;">SET</div>
</div>
<div class="r" style="left:382px;top:263px;width:605px;height:21px;background:#ffffff;"></div>
<div class="r" style="left:382px;top:284px;width:605px;height:1px;background:#a0a0a0;"></div>
<div class="r" style="left:381px;top:263px;width:606px;height:21px;overflow:hidden">
<div class="t" style="left:4.399999999999977px;top:5.42px;font-size:12.5px;line-height:12.5px;color:#000;font-weight:bold;transform:scaleX(0.985);transform-origin:0 0;">110103</div>
<div class="t" style="left:74.5px;top:5.69px;font-size:11px;line-height:11px;color:#000;transform:scaleX(0.9168);transform-origin:0 0;">TREADMILL EXERCISE MACHINE, FOLDABLE A...</div>
<div class="t" style="left:324px;top:5.69px;font-size:11px;line-height:11px;color:#000;transform:scaleX(0.95);transform-origin:0 0;">12</div>
<div class="t" style="left:399.79999999999995px;top:5.69px;font-size:11px;line-height:11px;color:#000;transform:scaleX(0.87);transform-origin:0 0;">SET</div>
</div>
<div class="r" style="left:382px;top:285px;width:605px;height:21px;background:#0078d7;"></div>
<div class="r" style="left:382px;top:306px;width:605px;height:1px;background:#a0a0a0;"></div>
<div class="r" style="left:381px;top:285px;width:606px;height:21px;overflow:hidden">
<div class="t" style="left:4.399999999999977px;top:5.42px;font-size:12.5px;line-height:12.5px;color:#fff;font-weight:bold;transform:scaleX(0.985);transform-origin:0 0;">110104</div>
<div class="t" style="left:74.5px;top:5.69px;font-size:11px;line-height:11px;color:#fff;transform:scaleX(0.9168);transform-origin:0 0;">TREADMILL EXERCISE MACHINE, FOLDABLE A...</div>
<div class="t" style="left:324px;top:5.69px;font-size:11px;line-height:11px;color:#fff;transform:scaleX(0.95);transform-origin:0 0;">1</div>
<div class="t" style="left:399.79999999999995px;top:5.69px;font-size:11px;line-height:11px;color:#fff;transform:scaleX(0.87);transform-origin:0 0;">SET</div>
</div>
<div class="r" style="left:382px;top:307px;width:605px;height:21px;background:#ffffff;"></div>
<div class="r" style="left:382px;top:328px;width:605px;height:1px;background:#a0a0a0;"></div>
<div class="r" style="left:381px;top:307px;width:606px;height:21px;overflow:hidden">
<div class="t" style="left:4.399999999999977px;top:5.42px;font-size:12.5px;line-height:12.5px;color:#000;font-weight:bold;transform:scaleX(0.985);transform-origin:0 0;">270107</div>
<div class="t" style="left:74.5px;top:5.69px;font-size:11px;line-height:11px;color:#000;transform:scaleX(0.9161);transform-origin:0 0;">PAINT SPRAY AIRLESS AIR-POWERD, GRACO P...</div>
<div class="t" style="left:324px;top:5.69px;font-size:11px;line-height:11px;color:#000;transform:scaleX(0.95);transform-origin:0 0;">50</div>
<div class="t" style="left:399.79999999999995px;top:5.69px;font-size:11px;line-height:11px;color:#000;transform:scaleX(0.87);transform-origin:0 0;">SET</div>
</div>
<div class="r" style="left:382px;top:329px;width:605px;height:21px;background:#f0f8ff;"></div>
<div class="r" style="left:382px;top:350px;width:605px;height:1px;background:#a0a0a0;"></div>
<div class="r" style="left:381px;top:329px;width:606px;height:21px;overflow:hidden">
<div class="t" style="left:4.399999999999977px;top:5.42px;font-size:12.5px;line-height:12.5px;color:#000;font-weight:bold;transform:scaleX(0.985);transform-origin:0 0;">270108</div>
<div class="t" style="left:74.5px;top:5.69px;font-size:11px;line-height:11px;color:#000;transform:scaleX(0.911);transform-origin:0 0;">PAINT SPRAY AIRLESS AIR-POWERD, GRACO E...</div>
<div class="t" style="left:324px;top:5.69px;font-size:11px;line-height:11px;color:#000;transform:scaleX(0.95);transform-origin:0 0;">4</div>
<div class="t" style="left:399.79999999999995px;top:5.69px;font-size:11px;line-height:11px;color:#000;transform:scaleX(0.87);transform-origin:0 0;">SET</div>
</div>
<div class="r" style="left:382px;top:351px;width:605px;height:21px;background:#ffffff;"></div>
<div class="r" style="left:382px;top:372px;width:605px;height:1px;background:#a0a0a0;"></div>
<div class="r" style="left:381px;top:351px;width:606px;height:21px;overflow:hidden">
<div class="t" style="left:4.399999999999977px;top:5.42px;font-size:12.5px;line-height:12.5px;color:#9a0020;font-weight:bold;transform:scaleX(0.985);transform-origin:0 0;">270109</div>
<div class="t" style="left:74.5px;top:5.69px;font-size:11px;line-height:11px;color:#9a0020;transform:scaleX(0.8804);transform-origin:0 0;">PAINT SPRAY AIRLESS ELECTRIC, GRACO E-EXT...</div>
<div class="t" style="left:324px;top:5.69px;font-size:11px;line-height:11px;color:#9a0020;transform:scaleX(0.95);transform-origin:0 0;">1</div>
<div class="t" style="left:399.79999999999995px;top:5.69px;font-size:11px;line-height:11px;color:#9a0020;transform:scaleX(0.87);transform-origin:0 0;">SET</div>
</div>
<div class="r" style="left:382px;top:373px;width:605px;height:21px;background:#f0f8ff;"></div>
<div class="r" style="left:382px;top:394px;width:605px;height:1px;background:#a0a0a0;"></div>
<div class="r" style="left:381px;top:373px;width:606px;height:21px;overflow:hidden">
<div class="t" style="left:4.399999999999977px;top:5.42px;font-size:12.5px;line-height:12.5px;color:#9a0020;font-weight:bold;transform:scaleX(0.985);transform-origin:0 0;">270110</div>
<div class="t" style="left:74.5px;top:5.69px;font-size:11px;line-height:11px;color:#9a0020;transform:scaleX(0.8804);transform-origin:0 0;">PAINT SPRAY AIRLESS ELECTRIC, GRACO E-EXT...</div>
<div class="t" style="left:324px;top:5.69px;font-size:11px;line-height:11px;color:#9a0020;transform:scaleX(0.95);transform-origin:0 0;">5</div>
<div class="t" style="left:399.79999999999995px;top:5.69px;font-size:11px;line-height:11px;color:#9a0020;transform:scaleX(0.87);transform-origin:0 0;">SET</div>
</div>
<div class="r" style="left:382px;top:395px;width:605px;height:21px;background:#ffffff;"></div>
<div class="r" style="left:382px;top:416px;width:605px;height:1px;background:#a0a0a0;"></div>
<div class="r" style="left:381px;top:395px;width:606px;height:21px;overflow:hidden">
<div class="t" style="left:4.399999999999977px;top:5.42px;font-size:12.5px;line-height:12.5px;color:#000;font-weight:bold;transform:scaleX(0.985);transform-origin:0 0;">311015</div>
<div class="t" style="left:74.5px;top:5.69px;font-size:11px;line-height:11px;color:#000;transform:scaleX(0.8991);transform-origin:0 0;">GOGGLE ACETATE CHEMICALRESIST, MSA FLEX...</div>
<div class="t" style="left:324px;top:5.69px;font-size:11px;line-height:11px;color:#000;transform:scaleX(0.95);transform-origin:0 0;">12</div>
<div class="t" style="left:399.79999999999995px;top:5.69px;font-size:11px;line-height:11px;color:#000;transform:scaleX(0.87);transform-origin:0 0;">PRS</div>
</div>
<div class="r" style="left:382px;top:417px;width:605px;height:21px;background:#f0f8ff;"></div>
<div class="r" style="left:382px;top:438px;width:605px;height:1px;background:#a0a0a0;"></div>
<div class="r" style="left:381px;top:417px;width:606px;height:21px;overflow:hidden">
<div class="t" style="left:4.399999999999977px;top:5.42px;font-size:12.5px;line-height:12.5px;color:#9a0020;font-weight:bold;transform:scaleX(0.985);transform-origin:0 0;">311016</div>
<div class="t" style="left:74.5px;top:5.69px;font-size:11px;line-height:11px;color:#9a0020;transform:scaleX(0.9308);transform-origin:0 0;">GOGGLE VALUTE FOR CHEMICAL &amp;, METAL SP...</div>
<div class="t" style="left:324px;top:5.69px;font-size:11px;line-height:11px;color:#9a0020;transform:scaleX(0.95);transform-origin:0 0;">1</div>
<div class="t" style="left:399.79999999999995px;top:5.69px;font-size:11px;line-height:11px;color:#9a0020;transform:scaleX(0.87);transform-origin:0 0;">PRS</div>
</div>
<div class="r" style="left:382px;top:439px;width:605px;height:21px;background:#ffffff;"></div>
<div class="r" style="left:382px;top:460px;width:605px;height:1px;background:#a0a0a0;"></div>
<div class="r" style="left:381px;top:439px;width:606px;height:21px;overflow:hidden">
<div class="t" style="left:4.399999999999977px;top:5.42px;font-size:12.5px;line-height:12.5px;color:#000;font-weight:bold;transform:scaleX(0.985);transform-origin:0 0;">330101</div>
<div class="t" style="left:74.5px;top:5.69px;font-size:11px;line-height:11px;color:#000;transform:scaleX(0.9308);transform-origin:0 0;">LIFERAFT INFLATABLE FOR 6MEN, THROW-OV...</div>
<div class="t" style="left:324px;top:5.69px;font-size:11px;line-height:11px;color:#000;transform:scaleX(0.95);transform-origin:0 0;">1</div>
<div class="t" style="left:399.79999999999995px;top:5.69px;font-size:11px;line-height:11px;color:#000;transform:scaleX(0.87);transform-origin:0 0;">SET</div>
</div>
<div class="r" style="left:382px;top:461px;width:605px;height:21px;background:#f0f8ff;"></div>
<div class="r" style="left:382px;top:482px;width:605px;height:1px;background:#a0a0a0;"></div>
<div class="r" style="left:381px;top:461px;width:606px;height:21px;overflow:hidden">
<div class="t" style="left:4.399999999999977px;top:5.42px;font-size:12.5px;line-height:12.5px;color:#000;font-weight:bold;transform:scaleX(0.985);transform-origin:0 0;">331098</div>
<div class="t" style="left:74.5px;top:5.69px;font-size:11px;line-height:11px;color:#000;transform:scaleX(0.9225);transform-origin:0 0;">POSTER DISPLAY UNIT, W SIZE 480X330MM</div>
<div class="t" style="left:324px;top:5.69px;font-size:11px;line-height:11px;color:#000;transform:scaleX(0.95);transform-origin:0 0;">1</div>
<div class="t" style="left:399.79999999999995px;top:5.69px;font-size:11px;line-height:11px;color:#000;transform:scaleX(0.87);transform-origin:0 0;">PCS</div>
</div>
<div class="r" style="left:382px;top:483px;width:605px;height:21px;background:#ffffff;"></div>
<div class="r" style="left:382px;top:504px;width:605px;height:1px;background:#a0a0a0;"></div>
<div class="r" style="left:381px;top:483px;width:606px;height:21px;overflow:hidden">
<div class="t" style="left:4.399999999999977px;top:5.42px;font-size:12.5px;line-height:12.5px;color:#000;font-weight:bold;transform:scaleX(0.985);transform-origin:0 0;">334059</div>
<div class="t" style="left:74.5px;top:5.69px;font-size:11px;line-height:11px;color:#000;transform:scaleX(0.9267);transform-origin:0 0;">SAFETY SIGN W/O TEXT LIFEBUOY, W/LIGHT &amp; ...</div>
<div class="t" style="left:324px;top:5.69px;font-size:11px;line-height:11px;color:#000;transform:scaleX(0.95);transform-origin:0 0;">10</div>
<div class="t" style="left:399.79999999999995px;top:5.69px;font-size:11px;line-height:11px;color:#000;transform:scaleX(0.87);transform-origin:0 0;">PCS</div>
</div>
<div class="r" style="left:382px;top:505px;width:605px;height:21px;background:#f0f8ff;"></div>
<div class="r" style="left:382px;top:526px;width:605px;height:1px;background:#a0a0a0;"></div>
<div class="r" style="left:381px;top:505px;width:606px;height:21px;overflow:hidden">
<div class="t" style="left:4.399999999999977px;top:5.42px;font-size:12.5px;line-height:12.5px;color:#000;font-weight:bold;transform:scaleX(0.985);transform-origin:0 0;">334060</div>
<div class="t" style="left:74.5px;top:5.69px;font-size:11px;line-height:11px;color:#000;transform:scaleX(0.908);transform-origin:0 0;">SAFETY SIGN W/O TEXT, LIFEJACKET 150X150MM</div>
<div class="t" style="left:324px;top:5.69px;font-size:11px;line-height:11px;color:#000;transform:scaleX(0.95);transform-origin:0 0;">20</div>
<div class="t" style="left:399.79999999999995px;top:5.69px;font-size:11px;line-height:11px;color:#000;transform:scaleX(0.87);transform-origin:0 0;">PCS</div>
</div>
<div class="r" style="left:382px;top:527px;width:605px;height:21px;background:#ffffff;"></div>
<div class="r" style="left:382px;top:548px;width:605px;height:1px;background:#a0a0a0;"></div>
<div class="r" style="left:381px;top:527px;width:606px;height:21px;overflow:hidden">
<div class="t" style="left:4.399999999999977px;top:5.42px;font-size:12.5px;line-height:12.5px;color:#000;font-weight:bold;transform:scaleX(0.985);transform-origin:0 0;">370103</div>
<div class="t" style="left:74.5px;top:5.69px;font-size:11px;line-height:11px;color:#000;transform:scaleX(0.9181);transform-origin:0 0;">BELL SIGNAL CAST BRASS 400MM</div>
<div class="t" style="left:324px;top:5.69px;font-size:11px;line-height:11px;color:#000;transform:scaleX(0.95);transform-origin:0 0;">8</div>
<div class="t" style="left:399.79999999999995px;top:5.69px;font-size:11px;line-height:11px;color:#000;transform:scaleX(0.87);transform-origin:0 0;">PCS</div>
<div class="t" style="left:459.5px;top:6.27px;font-size:11.5px;line-height:11.5px;color:#000;transform:scaleX(1.02);transform-origin:0 0;">qwerty</div>
</div>
<div class="r" style="left:382px;top:549px;width:605px;height:21px;background:#f0f8ff;"></div>
<div class="r" style="left:382px;top:570px;width:605px;height:1px;background:#a0a0a0;"></div>
<div class="r" style="left:381px;top:549px;width:606px;height:21px;overflow:hidden">
<div class="t" style="left:4.399999999999977px;top:5.42px;font-size:12.5px;line-height:12.5px;color:#000;font-weight:bold;transform:scaleX(0.985);transform-origin:0 0;">370187</div>
<div class="t" style="left:74.5px;top:5.69px;font-size:11px;line-height:11px;color:#000;transform:scaleX(0.9575);transform-origin:0 0;">AIR HORN FOR HULL L 75-200MTR, 135HZ 138...</div>
<div class="t" style="left:324px;top:5.69px;font-size:11px;line-height:11px;color:#000;transform:scaleX(0.95);transform-origin:0 0;">300</div>
<div class="t" style="left:399.79999999999995px;top:5.69px;font-size:11px;line-height:11px;color:#000;transform:scaleX(0.87);transform-origin:0 0;">SET</div>
</div>
<div class="r" style="left:382px;top:571px;width:605px;height:21px;background:#ffffff;"></div>
<div class="r" style="left:382px;top:592px;width:605px;height:1px;background:#a0a0a0;"></div>
<div class="r" style="left:381px;top:571px;width:606px;height:21px;overflow:hidden">
<div class="t" style="left:4.399999999999977px;top:5.42px;font-size:12.5px;line-height:12.5px;color:#000;font-weight:bold;transform:scaleX(0.985);transform-origin:0 0;">370188</div>
<div class="t" style="left:74.5px;top:5.69px;font-size:11px;line-height:11px;color:#000;transform:scaleX(0.9575);transform-origin:0 0;">AIR HORN FOR HULL L 75-200MTR, 165HZ 138...</div>
<div class="t" style="left:324px;top:5.69px;font-size:11px;line-height:11px;color:#000;transform:scaleX(0.95);transform-origin:0 0;">1</div>
<div class="t" style="left:399.79999999999995px;top:5.69px;font-size:11px;line-height:11px;color:#000;transform:scaleX(0.87);transform-origin:0 0;">SET</div>
</div>
<div class="r" style="left:382px;top:593px;width:605px;height:21px;background:#f0f8ff;"></div>
<div class="r" style="left:382px;top:614px;width:605px;height:1px;background:#a0a0a0;"></div>
<div class="r" style="left:381px;top:593px;width:606px;height:21px;overflow:hidden">
<div class="t" style="left:4.399999999999977px;top:5.42px;font-size:12.5px;line-height:12.5px;color:#000;font-weight:bold;transform:scaleX(0.985);transform-origin:0 0;">370189</div>
<div class="t" style="left:74.5px;top:5.69px;font-size:11px;line-height:11px;color:#000;transform:scaleX(0.9575);transform-origin:0 0;">AIR HORN FOR HULL L 75-200MTR, 165HZ 138...</div>
<div class="t" style="left:324px;top:5.69px;font-size:11px;line-height:11px;color:#000;transform:scaleX(0.95);transform-origin:0 0;">5</div>
<div class="t" style="left:399.79999999999995px;top:5.69px;font-size:11px;line-height:11px;color:#000;transform:scaleX(0.87);transform-origin:0 0;">SET</div>
<div class="t" style="left:459.5px;top:6.27px;font-size:11.5px;line-height:11.5px;color:#000;transform:scaleX(0.93);transform-origin:0 0;">16516516</div>
</div>
<div class="r" style="left:382px;top:615px;width:605px;height:21px;background:#ffffff;"></div>
<div class="r" style="left:382px;top:636px;width:605px;height:1px;background:#a0a0a0;"></div>
<div class="r" style="left:381px;top:615px;width:606px;height:21px;overflow:hidden">
<div class="t" style="left:4.399999999999977px;top:5.42px;font-size:12.5px;line-height:12.5px;color:#000;font-weight:bold;transform:scaleX(0.985);transform-origin:0 0;">370190</div>
<div class="t" style="left:74.5px;top:5.69px;font-size:11px;line-height:11px;color:#000;transform:scaleX(0.9575);transform-origin:0 0;">AIR HORN FOR HULL L 75-200MTR, 165HZ 138...</div>
<div class="t" style="left:324px;top:5.69px;font-size:11px;line-height:11px;color:#000;transform:scaleX(0.95);transform-origin:0 0;">1</div>
<div class="t" style="left:399.79999999999995px;top:5.69px;font-size:11px;line-height:11px;color:#000;transform:scaleX(0.87);transform-origin:0 0;">SET</div>
</div>
<div class="r" style="left:382px;top:637px;width:605px;height:21px;background:#f0f8ff;"></div>
<div class="r" style="left:382px;top:658px;width:605px;height:1px;background:#a0a0a0;"></div>
<div class="r" style="left:381px;top:637px;width:606px;height:21px;overflow:hidden">
<div class="t" style="left:4.399999999999977px;top:5.42px;font-size:12.5px;line-height:12.5px;color:#000;font-weight:bold;transform:scaleX(0.985);transform-origin:0 0;">370191</div>
<div class="t" style="left:74.5px;top:5.69px;font-size:11px;line-height:11px;color:#000;transform:scaleX(0.9575);transform-origin:0 0;">AIR HORN FOR HULL L 75-200MTR, 200HZ 138...</div>
<div class="t" style="left:324px;top:5.69px;font-size:11px;line-height:11px;color:#000;transform:scaleX(0.95);transform-origin:0 0;">1</div>
<div class="t" style="left:399.79999999999995px;top:5.69px;font-size:11px;line-height:11px;color:#000;transform:scaleX(0.87);transform-origin:0 0;">SET</div>
</div>
<div class="r" style="left:382px;top:659px;width:605px;height:21px;background:#ffffff;"></div>
<div class="r" style="left:382px;top:680px;width:605px;height:1px;background:#a0a0a0;"></div>
<div class="r" style="left:381px;top:659px;width:606px;height:21px;overflow:hidden">
<div class="t" style="left:4.399999999999977px;top:5.42px;font-size:12.5px;line-height:12.5px;color:#000;font-weight:bold;transform:scaleX(0.985);transform-origin:0 0;">370246</div>
<div class="t" style="left:74.5px;top:5.69px;font-size:11px;line-height:11px;color:#000;transform:scaleX(0.9506);transform-origin:0 0;">BAROMETER ANEROID MARINE USE, 150MM ...</div>
<div class="t" style="left:324px;top:5.69px;font-size:11px;line-height:11px;color:#000;transform:scaleX(0.95);transform-origin:0 0;">1</div>
<div class="t" style="left:399.79999999999995px;top:5.69px;font-size:11px;line-height:11px;color:#000;transform:scaleX(0.87);transform-origin:0 0;">PCS</div>
</div>
<div class="r" style="left:382px;top:681px;width:605px;height:21px;background:#f0f8ff;"></div>
<div class="r" style="left:382px;top:702px;width:605px;height:1px;background:#a0a0a0;"></div>
<div class="r" style="left:381px;top:681px;width:606px;height:21px;overflow:hidden">
<div class="t" style="left:4.399999999999977px;top:5.42px;font-size:12.5px;line-height:12.5px;color:#000;font-weight:bold;transform:scaleX(0.985);transform-origin:0 0;">371001</div>
<div class="t" style="left:74.5px;top:5.69px;font-size:11px;line-height:11px;color:#000;transform:scaleX(0.9054);transform-origin:0 0;">RULE PARALLEL PLASTIC PLAIN, 450MM</div>
<div class="t" style="left:324px;top:5.69px;font-size:11px;line-height:11px;color:#000;transform:scaleX(0.95);transform-origin:0 0;">5</div>
<div class="t" style="left:399.79999999999995px;top:5.69px;font-size:11px;line-height:11px;color:#000;transform:scaleX(0.87);transform-origin:0 0;">PCS</div>
</div>
<div class="r" style="left:382px;top:703px;width:605px;height:21px;background:#ffffff;"></div>
<div class="r" style="left:382px;top:724px;width:605px;height:1px;background:#a0a0a0;"></div>
<div class="r" style="left:381px;top:703px;width:606px;height:21px;overflow:hidden">
<div class="t" style="left:4.399999999999977px;top:5.42px;font-size:12.5px;line-height:12.5px;color:#000;font-weight:bold;transform:scaleX(0.985);transform-origin:0 0;">510701</div>
<div class="t" style="left:74.5px;top:5.69px;font-size:11px;line-height:11px;color:#000;transform:scaleX(0.93);transform-origin:0 0;">BRUSH TUBE STEEL CONDENSER, 10MM X 1/4...</div>
<div class="t" style="left:324px;top:5.69px;font-size:11px;line-height:11px;color:#000;transform:scaleX(0.95);transform-origin:0 0;">1</div>
<div class="t" style="left:399.79999999999995px;top:5.69px;font-size:11px;line-height:11px;color:#000;transform:scaleX(0.87);transform-origin:0 0;">PCS</div>
</div>
<div class="r" style="left:382px;top:725px;width:605px;height:21px;background:#f0f8ff;"></div>
<div class="r" style="left:382px;top:746px;width:605px;height:1px;background:#a0a0a0;"></div>
<div class="r" style="left:381px;top:725px;width:606px;height:21px;overflow:hidden">
<div class="t" style="left:4.399999999999977px;top:5.42px;font-size:12.5px;line-height:12.5px;color:#000;font-weight:bold;transform:scaleX(0.985);transform-origin:0 0;">510707</div>
<div class="t" style="left:74.5px;top:5.69px;font-size:11px;line-height:11px;color:#000;transform:scaleX(0.93);transform-origin:0 0;">BRUSH TUBE STEEL CONDENSER, 16MM X 5/1...</div>
<div class="t" style="left:324px;top:5.69px;font-size:11px;line-height:11px;color:#000;transform:scaleX(0.95);transform-origin:0 0;">1</div>
<div class="t" style="left:399.79999999999995px;top:5.69px;font-size:11px;line-height:11px;color:#000;transform:scaleX(0.87);transform-origin:0 0;">PCS</div>
</div>
<div class="r" style="left:382px;top:747px;width:605px;height:18px;background:#ffffff;"></div>
<div class="r" style="left:381px;top:747px;width:606px;height:18px;overflow:hidden">
<div class="t" style="left:4.399999999999977px;top:5.42px;font-size:12.5px;line-height:12.5px;color:#000;font-weight:bold;transform:scaleX(0.985);transform-origin:0 0;">510785</div>
<div class="t" style="left:74.5px;top:5.69px;font-size:11px;line-height:11px;color:#000;transform:scaleX(0.9198);transform-origin:0 0;">BRUSH WIRE WHEEL THREADED NUT, TYPE 75...</div>
<div class="t" style="left:324px;top:5.69px;font-size:11px;line-height:11px;color:#000;transform:scaleX(0.95);transform-origin:0 0;">100</div>
<div class="t" style="left:399.79999999999995px;top:5.69px;font-size:11px;line-height:11px;color:#000;transform:scaleX(0.87);transform-origin:0 0;">PCS</div>
</div>
<div class="r" style="left:451px;top:109px;width:1px;height:656px;background:#a0a0a0;"></div>
<div class="r" style="left:701px;top:109px;width:1px;height:656px;background:#a0a0a0;"></div>
<div class="r" style="left:777px;top:109px;width:1px;height:656px;background:#a0a0a0;"></div>
<div class="r" style="left:836px;top:109px;width:1px;height:656px;background:#a0a0a0;"></div>
<div class="r" style="left:986px;top:109px;width:1px;height:656px;background:#a0a0a0;"></div>
<div class="r" style="left:987px;top:88px;width:17px;height:677px;background:#f0f0f0;border-left:1px solid #fff;border-top:1px solid #fff;"></div>
<div class="r" style="left:995px;top:105px;width:2px;height:491px;background:#858585;"></div>
<div class="t" style="left:811px;top:776.10px;font-size:11.7px;line-height:11.7px;color:#2200cc;">Made by Yury Komar (Sea-Soft.ru)</div>
<div class="r" style="left:1005px;top:780px;width:2px;height:2px;background:#8a8a8a;"></div>
<div class="r" style="left:1001px;top:784px;width:2px;height:2px;background:#8a8a8a;"></div>
<div class="r" style="left:1005px;top:784px;width:2px;height:2px;background:#8a8a8a;"></div>
<div class="r" style="left:997px;top:788px;width:2px;height:2px;background:#8a8a8a;"></div>
<div class="r" style="left:1001px;top:788px;width:2px;height:2px;background:#8a8a8a;"></div>
<div class="r" style="left:1005px;top:788px;width:2px;height:2px;background:#8a8a8a;"></div>
</div>
</body></html>
